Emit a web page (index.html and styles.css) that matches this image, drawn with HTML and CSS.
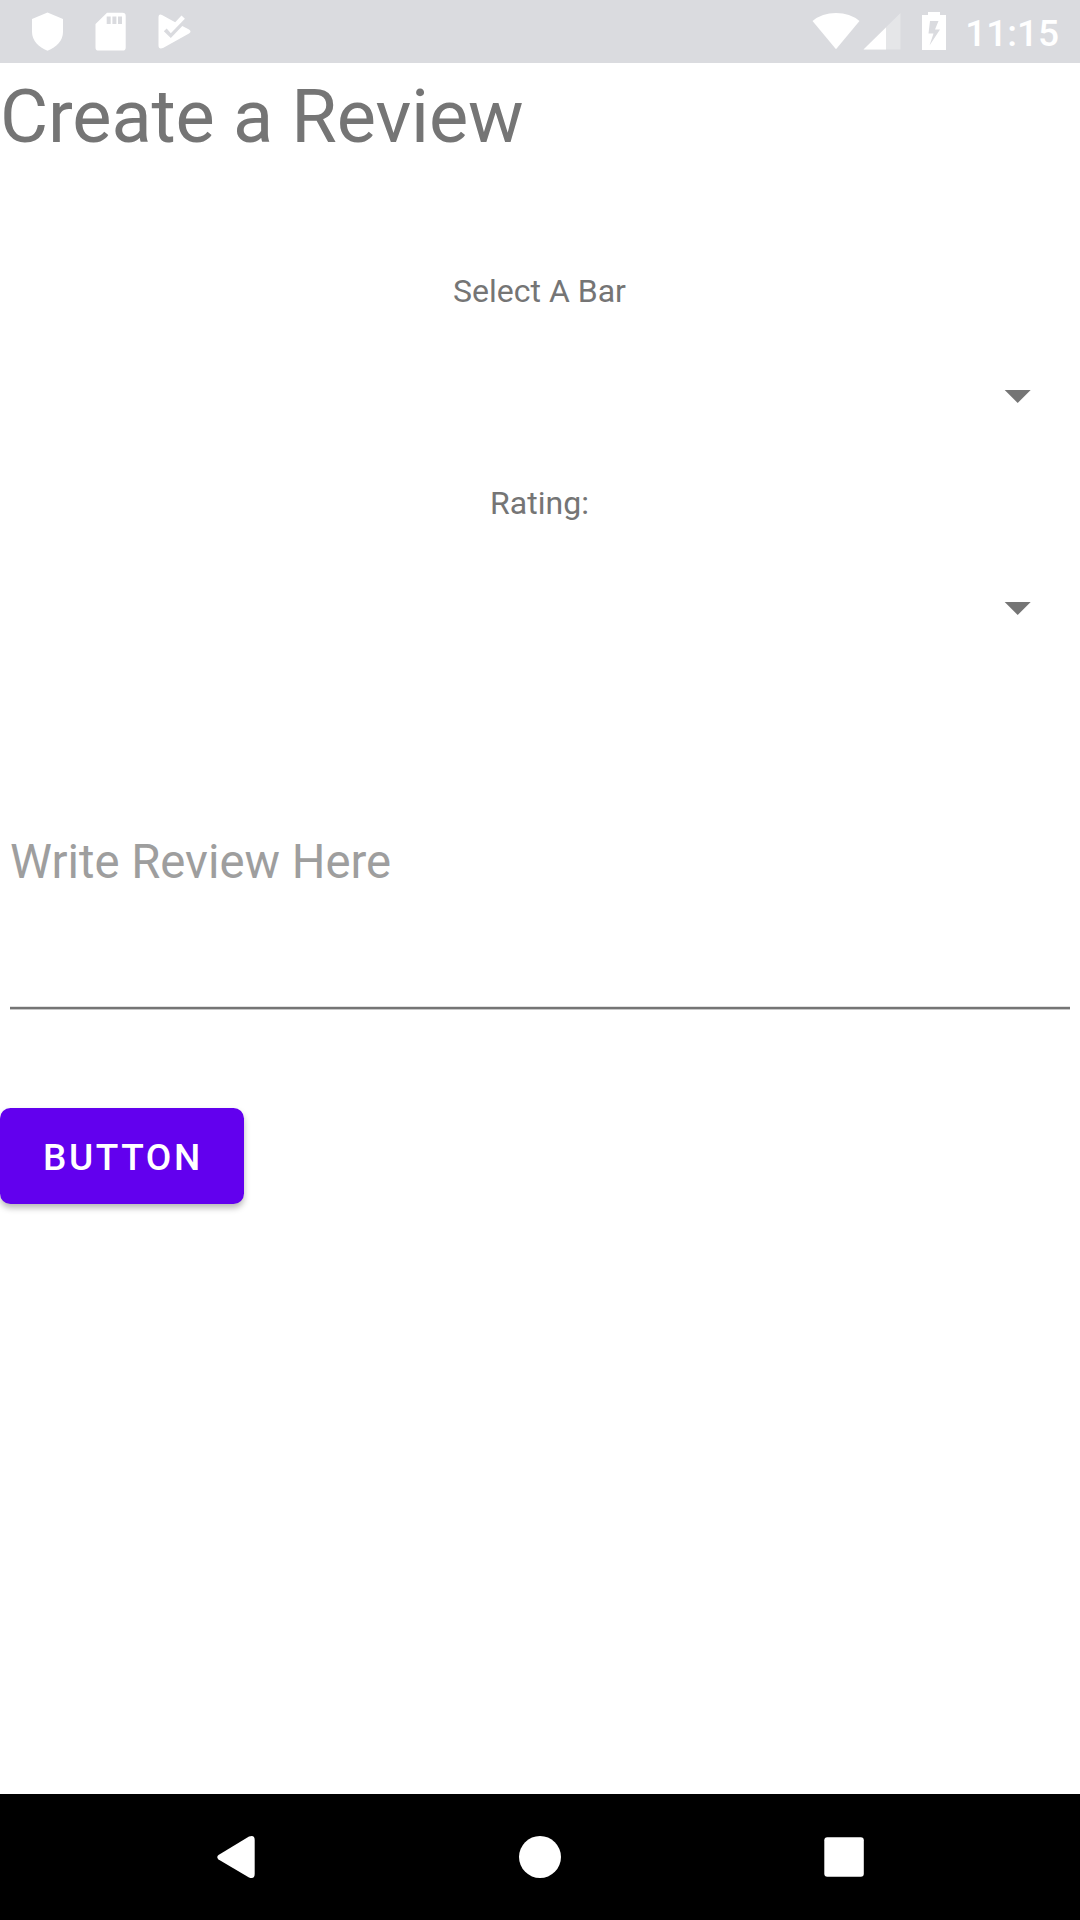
FILE: index.html
```html
<!DOCTYPE html>
<html lang="en">
<head>
<meta charset="utf-8">
<title>Create a Review</title>
<link rel="stylesheet" href="styles.css">
</head>
<body>
<div class="screen">
  <header class="status-bar">
    <svg class="status-icons" width="220" height="63" viewBox="0 0 220 63" fill="#fff">
      <path d="M47.5 12.5 63 19v13c0 8.500-6.500 15.500-15.500 18.700C38.500 47.500 32 40.500 32 32V19z"/>
      <path fill-rule="evenodd" d="M107 12.700h15.500a3.200 3.200 0 0 1 3.200 3.200v31.500a3.200 3.200 0 0 1-3.200 3.200H98.700a3.200 3.200 0 0 1-3.200-3.200V24zM106.700 16.500V24h4v-7.500zM112.400 16.500V24h4v-7.500zM118 16.500V24h4v-7.500z"/>
      <path d="M158.500 17.500Q158.500 13.500 162 15L175.200 22.300 181.500 15.600 184.900 18.700 170.800 33.300 166.700 28.500 163.800 31.300 170.800 38 182.300 26 189 29.500Q192 31.500 189 33.500L163 48Q158.500 49.500 158.500 45.500z"/>
    </svg>
    <div class="status-right">
      <svg width="140" height="63" viewBox="812 0 140 63" fill="#fff">
        <path d="M812.500 21Q822 13 836 13T859.500 21L836 49.300z"/>
        <path d="M900.500 13v36.500H863.500z" opacity=".3"/>
        <path d="M886 27.500v22H863.500z"/>
        <path fill-rule="evenodd" d="M928 12h12v3h6v35h-24V15h6zM930 21 928.500 33.500H933.500L929.500 45.500 940 29.500H935L938.500 21z"/>
      </svg>
      <span class="clock">11:15</span>
    </div>
  </header>
  <main class="form">
    <h1 class="title">Create a Review</h1>
    <label class="label">Select A Bar</label>
    <div class="spinner"><svg width="26" height="13" viewBox="0 0 26 13"><path d="M-.3 0h26L12.700 13z" fill="#757575"/></svg></div>
    <label class="label">Rating:</label>
    <div class="spinner"><svg width="26" height="13" viewBox="0 0 26 13"><path d="M-.3 0h26L12.700 13z" fill="#757575"/></svg></div>
    <div class="review">Write Review Here</div>
    <button class="button">BUTTON</button>
  </main>
  <nav class="nav-bar">
    <svg width="1080" height="126" viewBox="0 0 1080 126" fill="#fff">
      <path d="M218.500 61 249 42.600Q254.700 40.500 254.700 46V80Q254.700 85.500 249 83.400L218.500 65.500Q216 63.200 218.500 61z"/>
      <circle cx="540" cy="63" r="21"/>
      <rect x="824.300" y="43.300" width="39.500" height="39.500" rx="3"/>
    </svg>
  </nav>
</div>
</body>
</html>
```
FILE: styles.css
```css
* { box-sizing: border-box; }
body { margin: 0; background: #fff; font-family: Roboto, "Noto Sans", sans-serif; }
svg { display: block; overflow: visible; }
.screen { width: 1080px; height: 1920px; display: flex; flex-direction: column; overflow: hidden; }
.status-bar { height: 63px; flex: none; background: #dadbdf; display: flex; justify-content: space-between; }
.status-right { display: flex; padding-right: 21px; gap: 13px; }
.clock { font-size: 37px; font-weight: 500; line-height: 67px; color: #fff; }
.form { flex: 1; display: flex; flex-direction: column; color: #757575; }
.title { margin: 0; font-size: 74px; font-weight: 400; line-height: 108px; letter-spacing: -0.13px; }
.label { margin-top: 100px; height: 42px; padding-right: 1px; font-size: 32px; line-height: 40px; text-align: center; }
.spinner { height: 70px; margin-top: 42px; padding: 35px 49px 0 0; display: flex; justify-content: flex-end; }
.spinner + .label { margin-top: 58px; }
.review { height: 175px; margin: 197px 10px 0; font-size: 47.25px; line-height: 56px; color: #9e9e9e; border-bottom: 2px solid #757575; box-shadow: 0 1px 0 #c8c8c8, inset 0 -1px 0 #e2e2e2; }
.button { width: 244px; height: 96px; margin-top: 99px; padding: 2px 0 0 43px; border: 0; border-radius: 10.5px; background: #6200ee; color: #fff; font-family: inherit; font-size: 37px; font-weight: 500; letter-spacing: 2.6px; text-align: left; box-shadow: 0 4px 6px rgba(0,0,0,.28); }
.nav-bar { flex: none; height: 126px; background: #000; }
```
